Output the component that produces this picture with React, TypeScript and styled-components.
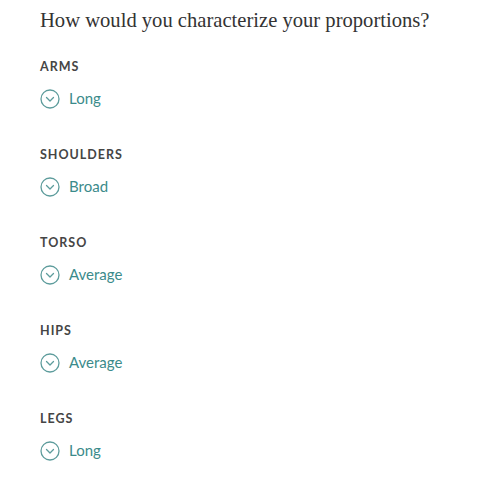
import React from 'react';
import styled, { createGlobalStyle } from 'styled-components';

const GlobalStyle = createGlobalStyle`
  body {
    margin: 0;
    background: #ffffff;
  }
`;

const Page = styled.div`
  padding: 6px 40px 0;
`;

const Heading = styled.h2`
  margin: 0 0 25px;
  font-family: 'Liberation Serif', serif;
  font-weight: 400;
  font-size: 20.6px;
  line-height: 28px;
  color: #333333;
`;

const Group = styled.div`
  display: flex;
  flex-direction: column;
  gap: 13px;
  margin-bottom: 38px;
`;

const Label = styled.div`
  font-family: Lato, 'Noto Sans', sans-serif;
  font-weight: 700;
  font-size: 12.5px;
  line-height: 16px;
  letter-spacing: 1px;
  color: #454545;
`;

const Choice = styled.button`
  display: flex;
  align-items: center;
  gap: 9px;
  padding: 0;
  border: 0;
  background: none;
  cursor: pointer;
  font-family: Lato, 'Noto Sans', sans-serif;
  font-size: 15px;
  line-height: 21px;
  color: #3b8b8b;
`;

const Chevron = () => (
  <svg width="20" height="20" viewBox="0 0 20 20" fill="none">
    <circle cx="10" cy="10" r="9" stroke="#5d9c9c" strokeWidth="1.3" />
    <path d="M6.5 8.5L10 12L13.5 8.5" stroke="#5d9c9c" strokeWidth="1.3" strokeLinecap="round" strokeLinejoin="round" />
  </svg>
);

const proportions = [
  { label: 'ARMS', value: 'Long' },
  { label: 'SHOULDERS', value: 'Broad' },
  { label: 'TORSO', value: 'Average' },
  { label: 'HIPS', value: 'Average' },
  { label: 'LEGS', value: 'Long' },
];

const App = () => (
  <>
    <GlobalStyle />
    <Page>
      <Heading>How would you characterize your proportions?</Heading>
      {proportions.map((p) => (
        <Group key={p.label}>
          <Label>{p.label}</Label>
          <Choice>
            <Chevron />
            {p.value}
          </Choice>
        </Group>
      ))}
    </Page>
  </>
);

export default App;
